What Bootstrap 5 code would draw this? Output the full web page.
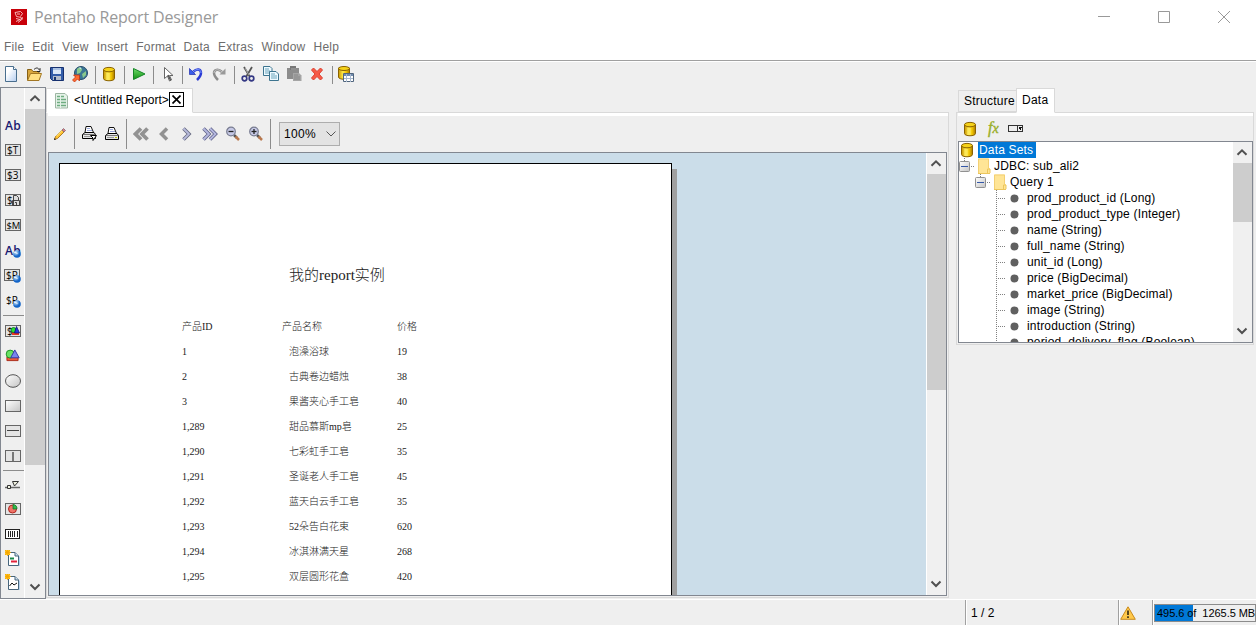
<!DOCTYPE html>
<html lang="en">
<head>
    <meta charset="UTF-8">
    <meta name="viewport" content="width=device-width, initial-scale=1.0">
    <title>Pentaho Report Designer</title>
    <link href="https://cdn.jsdelivr.net/npm/bootstrap@5.3.3/dist/css/bootstrap.min.css" rel="stylesheet">
    <style>
        body {
            height: 625px;
            background-color: #efefef;
            color: #000;
            font: 12px/16px "Liberation Sans", Arial, sans-serif;
            letter-spacing: .24px;
        }
        svg { display: block; flex: none; }
        .ico { width: 16px; height: 16px; }

        /* title and menu */
        .title-bar { height: 33px; padding-left: 11px; }
        .title-text {
            font: 16px/20px "Open Sans", "Noto Sans", sans-serif;
            letter-spacing: -.15px;
            color: #999;
            margin-left: 7px;
        }
        .win-buttons { gap: 48px; padding-right: 25px; margin-right: 1px; }
        .menu-bar {
            height: 28px;
            padding-left: 4px;
            gap: 8px;
            color: #6d6d6d;
            box-shadow: inset 0 -1px #a0a0a0;
        }

        /* toolbars */
        .main-tools { height: 26px; border-top: 1px solid #fff; }
        .report-tools { height: 36px; }
        .tool { width: 23px; display: flex; justify-content: center; }
        .main-tools .ico { margin: -1px 1px 0 0; }
        .tool-sep { width: 6px; display: flex; justify-content: center; }
        .tool-sep::before { content: ""; width: 1px; height: 18px; background: #8c8c8c; }
        .report-tools .tool-sep::before { height: 30px; }
        .zoom-select {
            width: 61px;
            height: 24px;
            margin-left: 6px;
            padding: 0 3px 0 4px;
            background: #e3e3e3;
            border: 1px solid #adadad;
            letter-spacing: .3px;
        }

        /* element palette */
        .workspace { height: 512px; }
        .palette { width: 46px; border: 1px solid #828790; }
        .palette-items { width: 23px; padding-top: 25px; }
        .pal { height: 25px; display: flex; align-items: center; justify-content: center; }
        .pal-low { height: 24.3px; }
        .pal-sep { height: 5px; padding: 2px 0 0 2px; }
        .pal-sep::before { content: ""; display: block; height: 1px; background: #8c8c8c; }
        .scroller { width: 20px; border-left: 1px solid #fff; background: #f0f0f0; }
        .scroll-btn { height: 21px; padding: 0 1px 2px 0; display: flex; align-items: center; justify-content: center; flex: none; }
        .scroll-thumb { background: #cdcdcd; flex: none; }
        .thumb-palette { height: 356px; }
        .thumb-report { height: 216px; }
        .thumb-tree { height: 59px; }

        /* report editor */
        .editor { width: 903px; padding-top: 1px; }
        .tab-item { border: 1px solid #d9d9d9; }
        .tab-active { background: #fff; border-bottom-color: #fff; margin-bottom: -1px; z-index: 1; }
        .editor-tab { width: 147px; height: 25px; padding-left: 7px; letter-spacing: .05px; }
        .editor-tab-label { margin: -2px 0 0 5px; }
        .tab-close { width: 15px; height: 15px; border: 1px solid #000; background: #fff; margin-top: -2px; }
        .panel-box { border: 1px solid #d9d9d9; }
        .white-strip { height: 3px; background: #fff; }
        .editor-panel { height: 486px; padding-left: 1px; }
        .canvas-view { height: 444px; border: 1px solid #828790; background: #cbdde9; margin-right: 1px; }
        .sheet-wrap { padding: 10px 0 0 10px; }
        .sheet {
            width: 613px;
            height: 600px;
            border: 1px solid #000;
            background: #fff;
            box-shadow: 5px 6px #a0a0a0;
            padding: 101px 0 0 122px;
            font: 10px/25px "Liberation Serif", "Noto Sans CJK SC", serif;
            font-weight: 300;
            letter-spacing: 0;
            color: #222;
        }
        .report-title { font-size: 15px; line-height: 20px; padding-left: 107px; margin-bottom: 29px; }
        .report-row { display: grid; grid-template-columns: 107px 108px 80px; height: 25px; }
        .report-head { grid-template-columns: 100px 115px 80px; }

        /* data panel */
        .data-side { width: 298px; margin-left: 7px; padding-top: 1px; }
        .side-tabs { padding-left: 2px; }
        .side-tab { height: 22px; line-height: 20px; padding: 0 2px 0 5px; width: 59px; }
        .side-tab-active { height: 25px; width: 39px; padding: 0 5px; line-height: 22px; margin-left: -1px; }
        .side-panel { height: 233px; padding-left: 1px; }
        .side-tools { height: 25px; padding: 0 0 0 4px; }
        .tree-box { height: 202px; border: 1px solid #828790; background: #fff; letter-spacing: .17px; }
        .tree-row { height: 16px; display: flex; align-items: center; white-space: pre; }
        .tree-sel { background: #0078d7; color: #fff; height: 16px; padding: 0 3px 0 1px; margin-left: 3px; }
        .folder-label { padding-left: 3px; }
        .leaf { padding-left: 36px; }
        .leaf svg { margin-right: 8px; }

        /* status line */
        .status-bar { height: 26px; border-top: 1px solid #fff; }
        .status-cell { border-left: 1px solid #a0a0a0; box-shadow: inset 1px 0 #fff; }
        .page-cell { width: 153px; padding-left: 5px; letter-spacing: 0; }
        .warn-cell { width: 34px; padding-left: 1px; }
        .mem-cell { width: 104px; padding: 4px 0 3px 1px; }
        .mem-bar {
            height: 18px;
            border: 1px solid #8c8c8c;
            background: linear-gradient(90deg, #0078d7 38px, #efefef 38px);
            font-size: 11px;
            letter-spacing: -.05px;
            padding-left: 2px;
        }
    </style>
</head>
<body class="d-flex flex-column overflow-hidden">
    <svg width="0" height="0" class="position-absolute">
        <defs>
            <linearGradient id="gold"><stop offset="0" stop-color="#c79600"/><stop offset=".4" stop-color="#ffe94a"/><stop offset=".7" stop-color="#f2c500"/><stop offset="1" stop-color="#a97900"/></linearGradient>
            <linearGradient id="grey" x2="1" y2="1"><stop offset="0" stop-color="#fff"/><stop offset="1" stop-color="#c4c4c4"/></linearGradient>
            <linearGradient id="paper" x2="1" y2="1"><stop offset=".3" stop-color="#fff"/><stop offset="1" stop-color="#b4cdf0"/></linearGradient>
            <linearGradient id="leafgreen" y2="1" x2="0"><stop offset="0" stop-color="#6fdc6a"/><stop offset="1" stop-color="#129012"/></linearGradient>
            <radialGradient id="globe" cx=".35" cy=".3"><stop offset="0" stop-color="#d8efff"/><stop offset="1" stop-color="#1264c8"/></radialGradient>
        </defs>
        <symbol id="i-db" viewBox="0 0 16 16"><path d="M2.500 3.800v8.700c0 3 11 3 11 0V3.800z" fill="url(#gold)" stroke="#8a6200"/><ellipse cx="8" cy="3.600" rx="5.500" ry="2.200" fill="#f5d219" stroke="#8a6200"/><path d="M6 7v7M8 7v7" stroke="#fff27a" stroke-width=".8"/></symbol>
        <symbol id="i-up" viewBox="0 0 12 8"><path d="M1.500 6.800 6 2.300l4.500 4.500" fill="none" stroke="#505050" stroke-width="2"/></symbol>
        <symbol id="i-down" viewBox="0 0 12 8"><path d="M1.500 1.500 6 6l4.500-4.500" fill="none" stroke="#505050" stroke-width="2"/></symbol>
        <symbol id="i-folder" viewBox="0 0 14 16"><path d="M1 .5h11v9.500h1v5.500H1z" fill="#ffe596"/><path d="M1.500 15V1h10v9.500" fill="none" stroke="#f3d074"/><path d="M1 15.500h12M10.500 15v-4H13v4" fill="none" stroke="#ecc65c"/></symbol>
        <symbol id="i-minus" viewBox="0 0 11 11"><rect x=".5" y=".5" width="10" height="10" rx="1" fill="url(#grey)" stroke="#919191"/><path d="M2 5.500h7" stroke="#3458a8"/></symbol>
        <symbol id="i-leaf" viewBox="0 0 24 16"><path d="M1.500 0v16M3 8.500h8" stroke="#808080" stroke-dasharray="1 1"/><circle cx="19.500" cy="8.500" r="4" fill="#606060"/></symbol>
        <symbol id="i-field" viewBox="0 0 16 12"><rect x=".5" y=".5" width="15" height="11" fill="#e4e4e4" stroke="#666"/></symbol>
        <symbol id="i-ball" viewBox="0 0 8 8"><circle cx="4" cy="4" r="3.800" fill="url(#globe)"/><path d="M1 2.500c2-1 2 1 3.500 1" stroke="#fff" fill="none" stroke-width=".8"/></symbol>
        <symbol id="i-shapes" viewBox="0 0 16 14"><path d="M2 8.500h12v4H2z" fill="#f05a3c" stroke="#a82918"/><circle cx="5.500" cy="5.500" r="4.300" fill="#69e264" stroke="#168d20"/><path d="M10.500 1 15.200 9.500H6z" fill="#7785ee" stroke="#3034a6"/></symbol>
        <symbol id="i-printer" viewBox="0 0 16 14"><path d="M4 6.500 5 .5h5l2.500 6z" fill="#fff" stroke="#111"/><path d="M6 2.500h3M6 4.500h5" stroke="#9aa8da"/><path d="M1.500 8.500 4 6.500h9l1.500 2v4h-13z" fill="#e4e4e4" stroke="#000"/><path d="M2 8.500h12" stroke="#444" stroke-width=".7"/><path d="M3 10.500h7" stroke="#999"/><path d="M11 10.500h2" stroke="#bdc400"/></symbol>
        <symbol id="i-glass" viewBox="0 0 16 16"><path d="m9 9 3 3" stroke="#555" stroke-width="2.500"/><path d="m10.500 10.500 3.500 3.500" stroke="#b9794f" stroke-width="2.500"/><circle cx="6" cy="5.500" r="4.300" fill="#c5c8e5" stroke="#777b90" stroke-width="1.200"/><path d="M3.500 5.500h5" stroke="#222" stroke-width="1.300"/></symbol>
        <symbol id="i-newdoc" viewBox="0 0 16 16"><path d="M5 3h6l4 4v9H5z" fill="#b5d3ee"/><path d="M3.500 2.500H10l3.500 3.500v9.500h-10z" fill="#fff" stroke="#47657c"/><path d="M10 2.500V6h3.500" fill="#cfe0ee" stroke="#47657c"/><path d="M0 0h5v5H0z" fill="#ffc31f"/><path d="M0 2.500h6M2.500 0v6M0 0l5 5M5 0 0 5" stroke="#f4a300" stroke-width=".8"/></symbol>
    </svg>

    <div class="bg-white">
        <div class="title-bar d-flex align-items-center">
            <svg width="16" height="16" viewBox="0 0 16 16"><path fill="#c80009" d="M0 0h16v16H0z"/><path d="M4 3.500 9.500 2.500l2 2-2 3M4 3.500l1.500 4M6 5h3M5.500 7.500l5 1M5 9.500l4 1 3-2M5 12.500l4-2M7 13.500l5-4" fill="none" stroke="#fbcaca" stroke-width=".9"/></svg>
            <span class="title-text">Pentaho Report Designer</span>
            <div class="win-buttons d-flex ms-auto">
                <svg width="12" height="12" viewBox="0 0 12 12"><path d="M0 5.500h12" stroke="#999"/></svg>
                <svg width="12" height="12" viewBox="0 0 12 12"><path d="M.5.5h11v11H.5z" fill="none" stroke="#999"/></svg>
                <svg width="12" height="12" viewBox="0 0 12 12"><path d="m0 0 12 12M12 0 0 12" stroke="#999"/></svg>
            </div>
        </div>
        <div class="menu-bar d-flex align-items-center">
            <span>File</span><span>Edit</span><span>View</span><span>Insert</span><span>Format</span><span>Data</span><span>Extras</span><span>Window</span><span>Help</span>
        </div>
    </div>

    <div class="main-tools d-flex align-items-center">
        <div class="tool"><svg class="ico" viewBox="0 0 16 16"><path d="M3 .5h7.500l3 3v12H2.500V.5z" fill="url(#paper)" stroke="#496e8e"/><path d="M10.500.5v3h3" fill="#fff" stroke="#496e8e"/></svg></div>
        <div class="tool"><svg class="ico" viewBox="0 0 16 16"><path d="M1.500 14V3.500h4l1.500 2h6V14z" fill="#d8a63d" stroke="#876116"/><path d="m1.500 14.500 3-7h11l-2.500 7z" fill="#ffdf82" stroke="#a27623"/><path d="M8 3.500c2-2 4-2 5 0l1-1v3h-3" fill="none" stroke="#222"/></svg></div>
        <div class="tool"><svg class="ico" viewBox="0 0 16 16"><path d="M1.500 1.500h13v13h-11l-2-2z" fill="#345da9" stroke="#16306f"/><path d="M4 2h8v6H4z" fill="#dce8f8"/><path d="M4 3h8" stroke="#7b9bcd"/><path d="M4 10h8v4H4z" fill="#b5bdcb"/><path d="M5 11h2v3H5z" fill="#17356f"/></svg></div>
        <div class="tool"><svg class="ico" viewBox="0 0 16 16"><circle cx="9" cy="7" r="6.500" fill="#3c7696" stroke="#254b6a"/><path d="M5 3c3-3 5-1 5 1L8 7 5 8zM10 8l4-3v4l-3 3z" fill="#8ac98c"/><path d="M7 2c1-1 3 0 2 1z" fill="#d9f0ff"/><path d="M1.500 9h6v6l-2-2-3 3-2-2 3-3z" fill="#ff6a2e" stroke="#bd2d0d" stroke-width=".7"/></svg></div>
        <div class="tool-sep"></div>
        <div class="tool"><svg class="ico"><use href="#i-db"/></svg></div>
        <div class="tool-sep"></div>
        <div class="tool"><svg class="ico" viewBox="0 0 16 16"><path d="M3.500 2.500 15 8 3.500 13.500z" fill="url(#leafgreen)" stroke="#168628"/></svg></div>
        <div class="tool-sep"></div>
        <div class="tool"><svg class="ico" viewBox="0 0 16 16"><path d="M5.500 1.500v11l3-2.500 2 5 2-1-2-4.500h3.500z" fill="#fff" stroke="#666"/><path d="m9 9 2.500 5" stroke="#555" stroke-width="1.500"/></svg></div>
        <div class="tool-sep"></div>
        <div class="tool"><svg class="ico" viewBox="0 0 16 16"><path d="M5 6c4-4 8-3 8 1 0 3-2 5-4 7" fill="none" stroke="#2b3bd4" stroke-width="2.500"/><path d="M5 6c4-4 8-3 8 1" fill="none" stroke="#7e9cff"/><path d="M1.500 2.500v6h6z" fill="#395dec" stroke="#202dae" stroke-width=".7"/></svg></div>
        <div class="tool"><svg class="ico" viewBox="0 0 16 16"><path d="M11 6C7 2 3 4 3 7c0 3 2 5 4 7" fill="none" stroke="#8c8c8c" stroke-width="2.500"/><path d="M11 6C7 2 3 4 3 7" fill="none" stroke="#c5c5c5"/><path d="M14.500 2.500v6h-6z" fill="#999"/></svg></div>
        <div class="tool-sep"></div>
        <div class="tool"><svg class="ico" viewBox="0 0 16 16"><path d="m4 1 6 10M12 1 6 11" stroke="#555" stroke-width="1.800"/><path d="m5 2 4 7" stroke="#ddd" stroke-width=".6"/><circle cx="4.500" cy="12.500" r="2.300" fill="none" stroke="#343884" stroke-width="1.700"/><circle cx="11.500" cy="12.500" r="2.300" fill="none" stroke="#343884" stroke-width="1.700"/></svg></div>
        <div class="tool"><svg class="ico" viewBox="0 0 16 16"><path d="M.5.5H7l2 2v7H.5z" fill="#eefaff" stroke="#3d748f"/><path d="M2 3h4M2 5h5M2 7h5" stroke="#6ca4bb"/><path d="M6.500 5.500H13l2.500 2.500v6.500h-9z" fill="#eefaff" stroke="#3d748f"/><path d="M8 8h4M8 10h6M8 12h6" stroke="#6ca4bb"/></svg></div>
        <div class="tool"><svg class="ico" viewBox="0 0 16 16"><path d="M1 2h12v11H1z" fill="#8c8c8c"/><path d="M4 0h6v4H4z" fill="#777"/><path d="M5 3h5" stroke="#aaa"/><path d="M7 7h6l2.500 2.500V15H7z" fill="#a5a5a5"/><path d="M8 9h4M8 11h6M8 13h6" stroke="#888"/></svg></div>
        <div class="tool"><svg class="ico" viewBox="0 0 16 16"><path d="m2.500 4 2-2L8 5.500 11.500 2l2 2L10 8l3.500 4-2 2L8 10.500 4.500 14l-2-2L6 8z" fill="#f65a47" stroke="#dd4030"/></svg></div>
        <div class="tool-sep"></div>
        <div class="tool"><svg class="ico" viewBox="0 0 16 16"><path d="M.5 2v9c0 3 11 3 11 0V2z" fill="url(#gold)" stroke="#8a6200"/><ellipse cx="6" cy="2.500" rx="5.500" ry="2" fill="#f5d219" stroke="#8a6200"/><path d="M5.500 7.500h10v8h-10z" fill="#fff" stroke="#50657d"/><path d="M6 8h9v2H6z" fill="#718bad"/><path d="M6 12.500h9M8.500 8v8M12.500 8v8" stroke="#a9bad0"/></svg></div>
    </div>

    <div class="workspace d-flex">
        <div class="palette d-flex">
            <div class="palette-items">
                <div class="pal"><svg width="18" height="16"><text x="1" y="12" font-family="Open Sans" font-size="12" font-weight="600" fill="#191970">Ab</text></svg></div>
                <div class="pal"><svg width="16" height="14"><use href="#i-field" width="16" height="12"/><text x="2" y="10" font-family="Open Sans" font-size="10" letter-spacing="0">$T</text></svg></div>
                <div class="pal"><svg width="16" height="14"><use href="#i-field" width="16" height="12"/><text x="2" y="10" font-family="Open Sans" font-size="10" letter-spacing="0">$3</text></svg></div>
                <div class="pal"><svg width="16" height="14" viewBox="0 0 16 14"><rect x=".5" y=".5" width="15" height="11" fill="#e4e4e4" stroke="#666"/><text x="2" y="10" font-family="Open Sans" font-size="10" letter-spacing="0">$</text><path d="M8.500 11V1.500h3l2 2V6M7.500 6.500h7v5h-7zM10 8.500h1.500v3" fill="#ddd" stroke="#333" stroke-width=".9"/></svg></div>
                <div class="pal"><svg width="16" height="14"><use href="#i-field" width="16" height="12"/><text x="1.500" y="10" font-family="Open Sans" font-size="9.500" letter-spacing="-.3">$M</text></svg></div>
                <div class="pal"><svg width="18" height="16"><text x="1" y="12" font-family="Open Sans" font-size="12" font-weight="600" fill="#191970">Ab</text><use href="#i-ball" x="9" y="7" width="8" height="8"/></svg></div>
                <div class="pal"><svg width="17" height="14"><use href="#i-field" width="16" height="12"/><text x="2" y="10" font-family="Open Sans" font-size="10" letter-spacing="0">$P</text><use href="#i-ball" x="9" y="6" width="8" height="8"/></svg></div>
                <div class="pal"><svg width="17" height="14"><text x="2" y="10" font-family="Open Sans" font-size="10" letter-spacing="0">$P</text><use href="#i-ball" x="9" y="6" width="8" height="8"/></svg></div>
                <div class="pal-sep"></div>
                <div class="pal"><svg width="16" height="12" viewBox="0 0 16 12"><use href="#i-field"/><text x="2" y="10" font-family="Open Sans" font-size="10">$</text><path d="M7 7h7v3H7z" fill="#e93524"/><circle cx="8.500" cy="5" r="2.500" fill="#26df35" stroke="#086b10" stroke-width=".8"/><path d="m11.500 1.500 3 6.500h-5z" fill="#2538e4" stroke="#0a1475" stroke-width=".8"/></svg></div>
                <div class="pal"><svg width="15" height="13"><use href="#i-shapes"/></svg></div>
                <div class="pal"><svg width="16" height="14"><ellipse cx="8" cy="7" rx="7.500" ry="6.300" fill="url(#grey)" stroke="#555"/></svg></div>
                <div class="pal"><svg width="16" height="12"><rect x=".5" y=".5" width="15" height="11" fill="url(#grey)" stroke="#666"/></svg></div>
                <div class="pal"><svg width="16" height="12"><use href="#i-field"/><path d="M2 5.500h12" stroke="#444"/></svg></div>
                <div class="pal"><svg width="16" height="12"><use href="#i-field"/><path d="M8 2v9" stroke="#555" stroke-width="1.500"/></svg></div>
                <div class="pal-sep"></div>
                <div class="pal pal-low"><svg width="16" height="10" viewBox="0 0 16 10"><path d="M0 7.500h15" stroke="#666" stroke-width="1.500"/><path d="M7.500 1.500h6l-4 4.500zM2.500 5.500h3v3h-3z" fill="#eef0df" stroke="#333"/></svg></div>
                <div class="pal pal-low"><svg width="16" height="12"><use href="#i-field"/><circle cx="7.500" cy="6" r="4" fill="#ee7368" stroke="#b3261e"/><path d="M8 6V1.500A4 4 0 0 1 12 6z" fill="#31bb4b" stroke="#0c6c20" stroke-width=".7"/></svg></div>
                <div class="pal pal-low"><svg width="16" height="10" shape-rendering="crispEdges"><rect x=".5" y=".5" width="14" height="9" fill="#fff" stroke="#222"/><path d="M3.500 2v6M5.500 2v6M9.500 2v6M12.500 2v6" stroke="#222"/><path d="M7 2h1v6H7z" fill="#222"/></svg></div>
                <div class="pal pal-low"><svg class="ico" viewBox="0 0 16 16"><use href="#i-newdoc"/><path d="M5 8.500h4" stroke="#16894a" stroke-width="2"/><path d="M6 11.500h6" stroke="#e2223b" stroke-width="2"/></svg></div>
                <div class="pal pal-low"><svg class="ico" viewBox="0 0 16 16"><use href="#i-newdoc"/><path d="m4.500 12 2.500-3 2 2 3-2" fill="none" stroke="#111"/></svg></div>
            </div>
            <div class="scroller d-flex flex-column flex-fill">
                <div class="scroll-btn"><svg width="12" height="8"><use href="#i-up"/></svg></div>
                <div class="scroll-thumb thumb-palette"></div>
                <div class="scroll-btn mt-auto"><svg width="12" height="8"><use href="#i-down"/></svg></div>
            </div>
        </div>

        <div class="editor">
            <div class="d-flex">
                <div class="tab-item tab-active editor-tab d-flex align-items-center">
                    <svg width="15" height="16" viewBox="0 0 15 16"><path d="M1.500.5H11L13.500 3v12h-12z" fill="#e5f2e8" stroke="#9db6a3"/><path d="M3 3.500h7M3 6.500h9M3 9.500h9M3 12.500h9" stroke="#6eac80" stroke-width="1.600"/><path d="M6.500 2v13" stroke="#e5f2e8"/></svg>
                    <span class="editor-tab-label text-nowrap">&lt;Untitled Report&gt;</span>
                    <span class="tab-close d-flex align-items-center justify-content-center"><svg width="9" height="9"><path d="m.5.5 8 8m0-8-8 8" stroke="#000" stroke-width="1.700"/></svg></span>
                </div>
            </div>
            <div class="panel-box editor-panel">
                <div class="white-strip"></div>
                <div class="report-tools d-flex align-items-center">
                    <div class="tool"><svg class="ico" viewBox="0 0 16 16"><path d="m2.500 13.500 1-3 6.500-6.500 2 2L5.500 12.500z" fill="#ffc42f" stroke="#9c6413" stroke-width=".8"/><path d="m4.500 10 6-6" stroke="#fff09b"/><path d="m10 4 1.500-1.500 2 2L12 6z" fill="#df8380" stroke="#836274" stroke-width=".8"/><path d="m2 14 .5-2L4 13.500z" fill="#222"/></svg></div>
                    <div class="tool-sep"></div>
                    <div class="tool"><svg class="ico" viewBox="0 0 16 16"><use href="#i-printer" width="16" height="14"/><path d="M9.500 9.500h6L12 14.500v-2.500z" fill="#fff" stroke="#000"/></svg></div>
                    <div class="tool"><svg class="ico" viewBox="0 0 16 16"><use href="#i-printer" width="16" height="14" y="1"/></svg></div>
                    <div class="tool-sep"></div>
                    <div class="tool"><svg class="ico" viewBox="0 0 16 16"><path d="M8 2.500 2.500 8 8 13.500M14.500 2.500 9 8l5.500 5.500" fill="none" stroke="#929292" stroke-width="3.800"/></svg></div>
                    <div class="tool"><svg class="ico" viewBox="0 0 16 16"><path d="M11 2.500 5.500 8l5.500 5.500" fill="none" stroke="#929292" stroke-width="3.500"/></svg></div>
                    <div class="tool"><svg class="ico" viewBox="0 0 16 16"><path d="M4.500 2.500 10 8l-5.500 5.500" fill="none" stroke="#666a82" stroke-width="3.500"/><path d="M4.500 2.500 10 8l-5.500 5.500" fill="none" stroke="#b9bcdd" stroke-width="1.800"/></svg></div>
                    <div class="tool"><svg class="ico" viewBox="0 0 16 16"><path d="M1.500 2.500 7 8l-5.500 5.500M8 2.500 13.500 8 8 13.500" fill="none" stroke="#62658b" stroke-width="3.500"/><path d="M1.500 2.500 7 8l-5.500 5.500M8 2.500 13.500 8 8 13.500" fill="none" stroke="#b5b8e0" stroke-width="1.800"/></svg></div>
                    <div class="tool"><svg class="ico"><use href="#i-glass"/></svg></div>
                    <div class="tool"><svg class="ico" viewBox="0 0 16 16"><use href="#i-glass"/><path d="M6 3v5" stroke="#222" stroke-width="1.300"/></svg></div>
                    <div class="tool-sep"></div>
                    <div class="zoom-select d-flex align-items-center justify-content-between">100%<svg width="10" height="6"><path d="m.5.500 4.500 4.500L9.500.5" fill="none" stroke="#555"/></svg></div>
                </div>
                <div class="canvas-view d-flex">
                    <div class="sheet-wrap flex-fill overflow-hidden">
                        <div class="sheet">
                            <div class="report-title">我的report实例</div>
                            <div class="report-row report-head"><span>产品ID</span><span>产品名称</span><span>价格</span></div>
                            <div class="report-row"><span>1</span><span>泡澡浴球</span><span>19</span></div>
                            <div class="report-row"><span>2</span><span>古典卷边蜡烛</span><span>38</span></div>
                            <div class="report-row"><span>3</span><span>果酱夹心手工皂</span><span>40</span></div>
                            <div class="report-row"><span>1,289</span><span>甜品慕斯mp皂</span><span>25</span></div>
                            <div class="report-row"><span>1,290</span><span>七彩虹手工皂</span><span>35</span></div>
                            <div class="report-row"><span>1,291</span><span>圣诞老人手工皂</span><span>45</span></div>
                            <div class="report-row"><span>1,292</span><span>蓝天白云手工皂</span><span>35</span></div>
                            <div class="report-row"><span>1,293</span><span>52朵告白花束</span><span>620</span></div>
                            <div class="report-row"><span>1,294</span><span>冰淇淋满天星</span><span>268</span></div>
                            <div class="report-row"><span>1,295</span><span>双层圆形花盒</span><span>420</span></div>
                        </div>
                    </div>
                    <div class="scroller d-flex flex-column">
                        <div class="scroll-btn"><svg width="12" height="8"><use href="#i-up"/></svg></div>
                        <div class="scroll-thumb thumb-report"></div>
                        <div class="scroll-btn mt-auto"><svg width="12" height="8"><use href="#i-down"/></svg></div>
                    </div>
                </div>
            </div>
        </div>

        <div class="data-side">
            <div class="side-tabs d-flex align-items-end">
                <div class="tab-item side-tab">Structure</div>
                <div class="tab-item tab-active side-tab-active">Data</div>
            </div>
            <div class="panel-box side-panel">
                <div class="white-strip"></div>
                <div class="side-tools d-flex align-items-center">
                    <svg class="ico"><use href="#i-db"/></svg>
                    <svg class="ms-2" width="17" height="18"><text x="2" y="13" font-family="Liberation Serif" font-style="italic" font-size="16" fill="#9aaf2b" stroke="#9aaf2b" stroke-width=".4" letter-spacing="0">f<tspan font-size="14">x</tspan></text></svg>
                    <svg class="ms-1" width="17" height="7" shape-rendering="crispEdges"><rect x="1.500" y=".5" width="14" height="6" fill="#eee" stroke="#333"/><path d="M10.500 0v7" stroke="#333"/><path d="M11.500 2h4l-2 3z" fill="#111"/></svg>
                </div>
                <div class="tree-box d-flex">
                    <div class="flex-fill overflow-hidden">
                        <div class="tree-row"><svg class="ico" width="16" height="16"><use href="#i-db"/></svg><span class="tree-sel">Data Sets</span></div>
                        <div class="tree-row"><svg width="18" height="16" viewBox="0 0 18 16"><path d="M5.500 0v3M12 8.500h4" stroke="#808080" stroke-dasharray="1 1"/><use href="#i-minus" y="3" width="11" height="11"/></svg><svg width="14" height="16"><use href="#i-folder"/></svg><span class="folder-label">JDBC: sub_ali2</span></div>
                        <div class="tree-row"><svg class="ms-3" width="18" height="16" viewBox="0 0 18 16"><path d="M5.500 0v3M12 8.500h4" stroke="#808080" stroke-dasharray="1 1"/><use href="#i-minus" y="3" width="11" height="11"/></svg><svg width="14" height="16"><use href="#i-folder"/></svg><span class="folder-label">Query 1</span></div>
                        <div class="tree-row leaf"><svg width="24" height="16"><use href="#i-leaf"/></svg>prod_product_id (Long)</div>
                        <div class="tree-row leaf"><svg width="24" height="16"><use href="#i-leaf"/></svg>prod_product_type (Integer)</div>
                        <div class="tree-row leaf"><svg width="24" height="16"><use href="#i-leaf"/></svg>name (String)</div>
                        <div class="tree-row leaf"><svg width="24" height="16"><use href="#i-leaf"/></svg>full_name (String)</div>
                        <div class="tree-row leaf"><svg width="24" height="16"><use href="#i-leaf"/></svg>unit_id (Long)</div>
                        <div class="tree-row leaf"><svg width="24" height="16"><use href="#i-leaf"/></svg>price (BigDecimal)</div>
                        <div class="tree-row leaf"><svg width="24" height="16"><use href="#i-leaf"/></svg>market_price (BigDecimal)</div>
                        <div class="tree-row leaf"><svg width="24" height="16"><use href="#i-leaf"/></svg>image (String)</div>
                        <div class="tree-row leaf"><svg width="24" height="16"><use href="#i-leaf"/></svg>introduction (String)</div>
                        <div class="tree-row leaf"><svg width="24" height="16"><use href="#i-leaf"/></svg>period_delivery_flag (Boolean)</div>
                    </div>
                    <div class="scroller d-flex flex-column">
                        <div class="scroll-btn"><svg width="12" height="8"><use href="#i-up"/></svg></div>
                        <div class="scroll-thumb thumb-tree"></div>
                        <div class="scroll-btn mt-auto"><svg width="12" height="8"><use href="#i-down"/></svg></div>
                    </div>
                </div>
            </div>
        </div>
    </div>

    <div class="status-bar d-flex justify-content-end">
        <div class="status-cell page-cell d-flex align-items-center">1 / 2</div>
        <div class="status-cell warn-cell d-flex align-items-center"><svg width="16" height="14" viewBox="0 0 16 14"><path d="m8 .8 7.300 12.500H.7z" fill="#ffc84a" stroke="#c98a1c" stroke-linejoin="round"/><path d="M8 4.500v4.500M8 10.300v1.700" stroke="#3c2f12" stroke-width="1.700"/></svg></div>
        <div class="status-cell mem-cell"><div class="mem-bar d-flex align-items-center text-nowrap">495.6 of&nbsp; 1265.5 MB</div></div>
    </div>

    <script src="https://cdn.jsdelivr.net/npm/bootstrap@5.3.3/dist/js/bootstrap.bundle.min.js"></script>
</body>
</html>
